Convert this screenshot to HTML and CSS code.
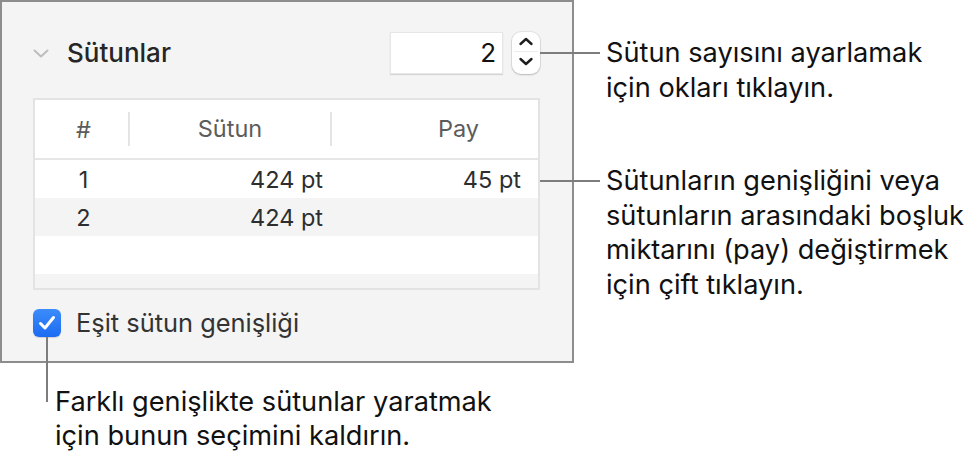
FILE: index.html
```html
<!DOCTYPE html>
<html lang="tr">
<head>
    <meta charset="UTF-8">
    <meta name="viewport" content="width=device-width, initial-scale=1.0">
    <title>Sütunlar</title>
    <link rel="stylesheet" href="styles.css">
</head>
<body>

    <div class="figure">
        <section class="panel">
            <div class="panel-head">
                <svg class="chevron" width="16" height="9" viewBox="0 0 16 9">
                    <path d="M1.5 1.5 L8 7.5 L14.5 1.5" fill="none" stroke="#bdbdbd" stroke-width="2" stroke-linecap="round" stroke-linejoin="round"/>
                </svg>
                <h2 class="title">Sütunlar</h2>
                <div class="count">2</div>
                <div class="stepper">
                    <svg width="28" height="42" viewBox="0 0 28 42">
                        <line x1="2" y1="19.5" x2="26" y2="19.5" stroke="#ececec" stroke-width="1"/>
                        <path d="M8.5 12 L14 7 L19.5 12" fill="none" stroke="#1e1e1e" stroke-width="2.4" stroke-linecap="round" stroke-linejoin="round"/>
                        <path d="M8.5 27 L14 32 L19.5 27" fill="none" stroke="#1e1e1e" stroke-width="2.4" stroke-linecap="round" stroke-linejoin="round"/>
                    </svg>
                </div>
            </div>

            <div class="table">
                <div class="row head">
                    <div class="cell num">#</div>
                    <div class="cell col sep">Sütun</div>
                    <div class="cell pay sep">Pay</div>
                </div>
                <div class="row">
                    <div class="cell num">1</div>
                    <div class="cell col">424 pt</div>
                    <div class="cell pay">45 pt</div>
                </div>
                <div class="row alt">
                    <div class="cell num">2</div>
                    <div class="cell col">424 pt</div>
                    <div class="cell pay"></div>
                </div>
                <div class="row"></div>
                <div class="row alt"></div>
            </div>

            <label class="check">
                <span class="box">
                    <svg width="28" height="28" viewBox="0 0 28 28">
                        <path d="M7.5 14.5 L12 19 L20.5 8.5" fill="none" stroke="#fff" stroke-width="3" stroke-linecap="round" stroke-linejoin="round"/>
                    </svg>
                </span>
                Eşit sütun genişliği
            </label>
        </section>

        <!-- callouts -->
        <div class="callout callout-count">
            <span class="line"></span>
            <p>Sütun sayısını ayarlamak<br>için okları tıklayın.</p>
        </div>

        <div class="callout callout-width">
            <span class="line"></span>
            <p>Sütunların genişliğini veya<br>sütunların arasındaki boşluk<br>miktarını (pay) değiştirmek<br>için çift tıklayın.</p>
        </div>

        <div class="callout callout-check">
            <span class="vline"></span>
            <p>Farklı genişlikte sütunlar yaratmak<br>için bunun seçimini kaldırın.</p>
        </div>
    </div>

</body>
</html>
```

FILE: styles.css
```css
/* Basic Reset */
* {
    margin: 0;
    padding: 0;
    box-sizing: border-box;
}

body {
    font-family: "Inter", "Noto Sans", sans-serif;
    background-color: #fff;
    color: #111;
    width: 979px;
    height: 463px;
    overflow: hidden;
}

.figure {
    position: relative;
    width: 979px;
    height: 463px;
}

/* Inspector panel */
.panel {
    width: 574px;
    height: 363px;
    background-color: #f4f4f4;
    border: 2px solid #8d8d8d;
    padding: 29px 32px 0 31px;
    display: flex;
    flex-direction: column;
}

.panel-head {
    display: flex;
    align-items: center;
    height: 43px;
}

.chevron {
    margin-top: 2px;
}

.title {
    margin-left: 18px;
    font-size: 26px;
    font-weight: 500;
    color: #262626;
    flex: 1;
}

.count {
    width: 113px;
    height: 42px;
    background-color: #fff;
    border: 1px solid #e6e6e6;
    box-shadow: 0 1px 1px rgba(0, 0, 0, 0.12);
    font-size: 26px;
    color: #111;
    text-align: right;
    padding-right: 6px;
    line-height: 40px;
}

.stepper {
    margin-left: 9px;
    width: 28px;
    height: 42px;
    background-color: #fff;
    border-radius: 9px;
    box-shadow: 0 0 0 1px rgba(0, 0, 0, 0.06), 0 1px 2px rgba(0, 0, 0, 0.2);
}

.stepper svg {
    display: block;
}

/* Columns table */
.table {
    margin-top: 24px;
    height: 192px;
    border: 2px solid #e3e3e3;
    background-color: #fff;
    overflow: hidden;
}

.row {
    display: grid;
    grid-template-columns: 93px 202px 1fr;
    align-items: center;
    height: 38px;
    font-size: 23.5px;
    color: #2e2e2e;
}

.row.alt {
    background-color: #f4f4f5;
}

.row.head {
    height: 60px;
    border-bottom: 2px solid #e6e6e6;
    color: #5c5c5c;
}

.cell.num {
    text-align: center;
    padding-left: 4px;
}

.cell.col {
    text-align: right;
    padding-right: 7px;
}

.cell.pay {
    text-align: right;
    padding-right: 17px;
}

.head .cell.col {
    text-align: center;
    padding-right: 0;
}

.head .cell.pay {
    padding-right: 59px;
}

.head .sep {
    border-left: 2px solid #e4e4e4;
    height: 34px;
    line-height: 34px;
}

/* Checkbox */
.check {
    margin-top: 17px;
    display: flex;
    align-items: center;
    gap: 15px;
    font-size: 25.4px;
    color: #333;
}

.box {
    width: 28px;
    height: 28px;
    border-radius: 6px;
    background: linear-gradient(#3c8cfb, #1b6cf2);
    box-shadow: 0 1px 1px rgba(0, 0, 0, 0.15);
}

.box svg {
    display: block;
}

/* Callouts */
.callout {
    position: absolute;
    display: flex;
    align-items: flex-start;
    font-size: 27.2px;
    line-height: 34.5px;
    color: #111;
}

.callout .line {
    width: 60px;
    height: 2px;
    background-color: #7d7d7d;
    margin-top: 16px;
    margin-right: 6px;
}

.callout-count {
    left: 540px;
    top: 36px;
}

.callout-width {
    left: 540px;
    top: 164px;
}

.callout-check {
    left: 46px;
    top: 337px;
}

.callout .vline {
    width: 2px;
    height: 65px;
    background-color: #7d7d7d;
    margin-right: 7px;
}

.callout-check p {
    margin-top: 48px;
    line-height: 34px;
}
```
